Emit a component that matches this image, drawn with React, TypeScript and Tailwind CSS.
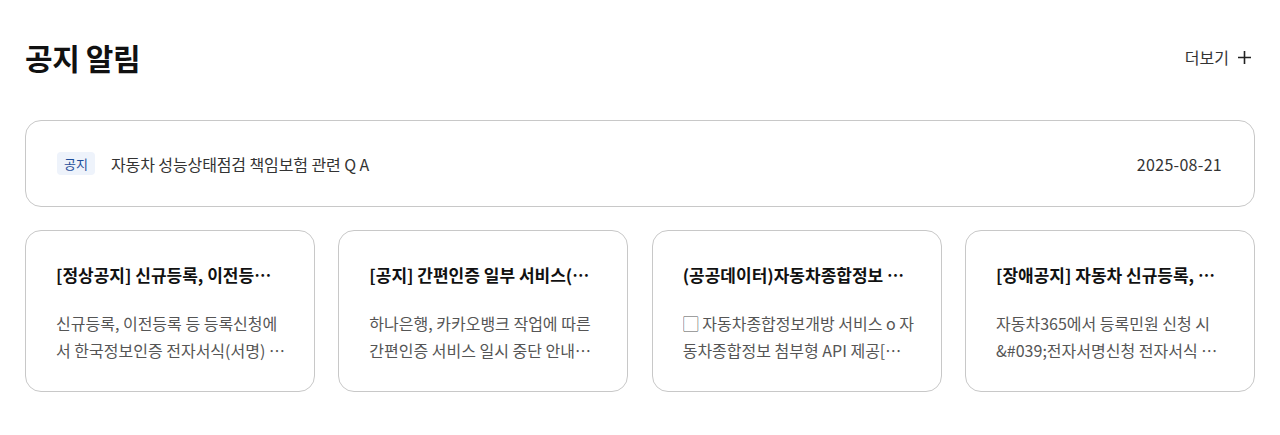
import React from "react";

const cards = [
  {
    title: "[정상공지] 신규등록, 이전등록 등 등록신청에서 한국정보인증 전자서식(서명) 정상화 안내",
    body: "신규등록, 이전등록 등 등록신청에서 한국정보인증 전자서식(서명) 정상화 안내드립니다.",
  },
  {
    title: "[공지] 간편인증 일부 서비스(하나은행, 카카오뱅크) 일시 중단 안내",
    body: "하나은행, 카카오뱅크 작업에 따른 간편인증 서비스 일시 중단 안내드립니다.",
  },
  {
    title: "(공공데이터)자동차종합정보 첨부형 API 제공",
    body: "▢ 자동차종합정보개방 서비스 o 자동차종합정보 첨부형 API 제공[공공데이터포털]",
  },
  {
    title: "[장애공지] 자동차 신규등록, 이전등록 전자서명 장애 안내",
    body: "자동차365에서 등록민원 신청 시 &#039;전자서명신청 전자서식 장애가 발생하였습니다.",
  },
];

export default function App() {
  return (
    <div
      className="w-[1280px] h-[435px] bg-white px-[25px] pt-[35px]"
      style={{ fontFamily: '"Noto Sans CJK KR", "Noto Sans", sans-serif' }}
    >
      <div className="flex items-center justify-between h-[44px]">
        <h2 className="text-[30px] font-bold text-[#111] tracking-[-0.4px]">공지 알림</h2>
        <button className="flex items-center gap-[9px] text-[16px] text-[#333] mr-[4px]">
          더보기
          <svg width="13" height="13" viewBox="0 0 13 13" fill="none" stroke="#222" strokeWidth="1.6">
            <path d="M6.5 0v13M0 6.5h13" />
          </svg>
        </button>
      </div>

      <div className="mt-[41px] h-[87px] rounded-[16px] border border-[#c8c8c8] flex items-center justify-between pl-[31px] pr-[32px]">
        <div className="flex items-center gap-[16px]">
          <span className="h-[23px] px-[7px] rounded-[4px] bg-[#eef3fb] text-[#1f4e9a] text-[13px] leading-[23px]">공지</span>
          <span className="text-[16px] text-[#333] tracking-[-0.1px]">자동차 성능상태점검 책임보험 관련 Q A</span>
        </div>
        <span className="text-[16px] text-[#333] tracking-[0.3px]">2025-08-21</span>
      </div>

      <div className="mt-[23px] grid grid-cols-4 gap-[23.33px]">
        {cards.map((c, i) => (
          <div
            key={i}
            className="h-[162px] rounded-[16px] border border-[#c8c8c8] pl-[30px] pr-[26px] pt-[30px]"
          >
            <div className="text-[17px] font-bold text-[#111] truncate leading-[28px] pr-[4px]">{c.title}</div>
            <div className="mt-[21px] text-[16px] text-[#555] leading-[27px] line-clamp-2">{c.body}</div>
          </div>
        ))}
      </div>
    </div>
  );
}
